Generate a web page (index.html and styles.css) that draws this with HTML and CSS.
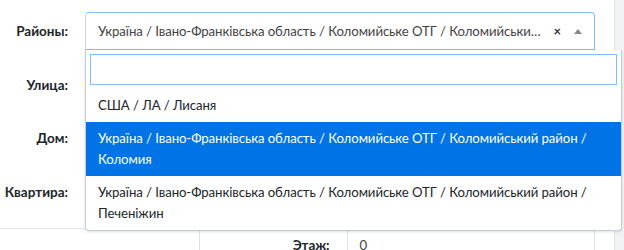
FILE: index.html
```html
<!DOCTYPE html>
<html lang="uk">
<head>
    <meta charset="UTF-8">
    <title>Адреса</title>
    <link rel="stylesheet" href="styles.css">
</head>
<body>
    <div class="page">
        <div class="card">
            <form class="address-form">
                <div class="form-row">
                    <label class="form-label">Районы:</label>
                    <div class="form-field">
                        <div class="select-box is-open">
                            <span class="select-text">Україна / Івано-Франківська область / Коломийське ОТГ / Коломийський район / Коломия</span>
                            <span class="select-clear">×</span>
                            <span class="select-arrow"></span>
                        </div>
                        <div class="select-dropdown">
                            <div class="select-search">
                                <input type="search" class="search-input">
                            </div>
                            <ul class="select-results">
                                <li class="select-option">США / ЛА / Лисаня</li>
                                <li class="select-option is-active">Україна / Івано-Франківська область / Коломийське ОТГ / Коломийський район / Коломия</li>
                                <li class="select-option">Україна / Івано-Франківська область / Коломийське ОТГ / Коломийський район / Печеніжин</li>
                            </ul>
                        </div>
                    </div>
                </div>
                <div class="form-row">
                    <label class="form-label">Улица:</label>
                    <div class="form-field"><input type="text" class="form-input"></div>
                </div>
                <div class="form-row">
                    <label class="form-label">Дом:</label>
                    <div class="form-field"><input type="text" class="form-input"></div>
                </div>
                <div class="form-row">
                    <label class="form-label">Квартира:</label>
                    <div class="form-field"><input type="text" class="form-input"></div>
                </div>
            </form>

            <table class="info-table">
                <tr>
                    <td class="cell-empty"></td>
                    <th class="cell-label">Этаж:</th>
                    <td class="cell-value">0</td>
                    <td class="cell-tail"></td>
                </tr>
            </table>
        </div>
        <div class="gutter"></div>
    </div>
</body>
</html>
```

FILE: styles.css
```css
body {
    margin: 0;
    font-family: Lato, "Open Sans", sans-serif;
    font-size: 13.2px;
    letter-spacing: -0.08px;
    color: #212529;
    background-color: #f4f6f9;
}

.page {
    display: flex;
    height: 250px;
    overflow: hidden;
}

.card {
    width: 614px;
    flex: none;
    background-color: #fff;
    border-right: 1px solid #dee2e6;
}

.gutter {
    flex: 1;
    background-color: #f2f3f7;
}

/* form rows */
.address-form {
    padding-top: 12px;
    display: flex;
    flex-direction: column;
    gap: 15.5px;
}

.form-row {
    display: flex;
    align-items: center;
    height: 38px;
}

.form-label {
    width: 68px;
    margin-right: 17px;
    text-align: right;
    font-weight: 700;
    font-size: 13.5px;
    letter-spacing: 0;
    color: #212529;
    white-space: nowrap;
}

.form-field {
    position: relative;
    width: 510px;
}

.form-input {
    box-sizing: border-box;
    width: 100%;
    height: 38px;
    border: 1px solid #ced4da;
    border-radius: 4px;
}

/* select */
.select-box {
    box-sizing: border-box;
    display: flex;
    align-items: center;
    height: 38px;
    padding: 0 12px;
    border: 1px solid #80bdff;
    border-left-color: #c9d3de;
    border-radius: 4px;
    background-color: #fff;
}

.select-box.is-open {
    border-bottom-left-radius: 0;
    border-bottom-right-radius: 0;
}

.select-text {
    flex: 1;
    min-width: 0;
    overflow: hidden;
    white-space: nowrap;
    text-overflow: ellipsis;
    color: #444;
}

.select-clear {
    margin-left: 6px;
    font-weight: 700;
    font-size: 13px;
    color: #333;
}

.select-arrow {
    width: 0;
    height: 0;
    margin-left: 13px;
    border-style: solid;
    border-width: 0 4px 5px 4px;
    border-color: transparent transparent #888 transparent;
}

.select-dropdown {
    position: absolute;
    top: 100%;
    left: 0;
    z-index: 10;
    width: 537px;
    box-sizing: border-box;
    background-color: #fff;
    border: 1px solid #c6ccd3;
    border-top: none;
    border-radius: 0 0 4px 4px;
    box-shadow: 0 1px 3px rgba(0, 0, 0, 0.12);
}

.select-search {
    padding: 4px;
}

.search-input {
    box-sizing: border-box;
    width: 100%;
    height: 31px;
    border: 1px solid #80bdff;
    outline: none;
}

.select-results {
    list-style: none;
    margin: 0;
    padding: 0;
}

.select-option {
    padding: 6px 12px;
    line-height: 21px;
    color: #212529;
}

.select-option.is-active {
    background-color: #0074e6;
    color: #fff;
}

/* table below */
.info-table {
    margin-top: 17.5px;
    width: 614px;
    table-layout: fixed;
    border-collapse: collapse;
}

.info-table td,
.info-table th {
    box-sizing: border-box;
    border-top: 1px solid #dee2e6;
    padding: 8px 12px;
    height: 37px;
    vertical-align: top;
}

.cell-empty {
    width: 199px;
    border-right: 1px solid #dee2e6;
}

.cell-label {
    width: 148px;
    text-align: right;
    padding-right: 17px !important;
    border-right: 1px solid #dee2e6;
    font-weight: 700;
    font-size: 13.5px;
}

.cell-value {
    width: 247px;
    border-right: 1px solid #dee2e6;
    color: #444;
}

.cell-tail {
    width: 20px;
}
```
